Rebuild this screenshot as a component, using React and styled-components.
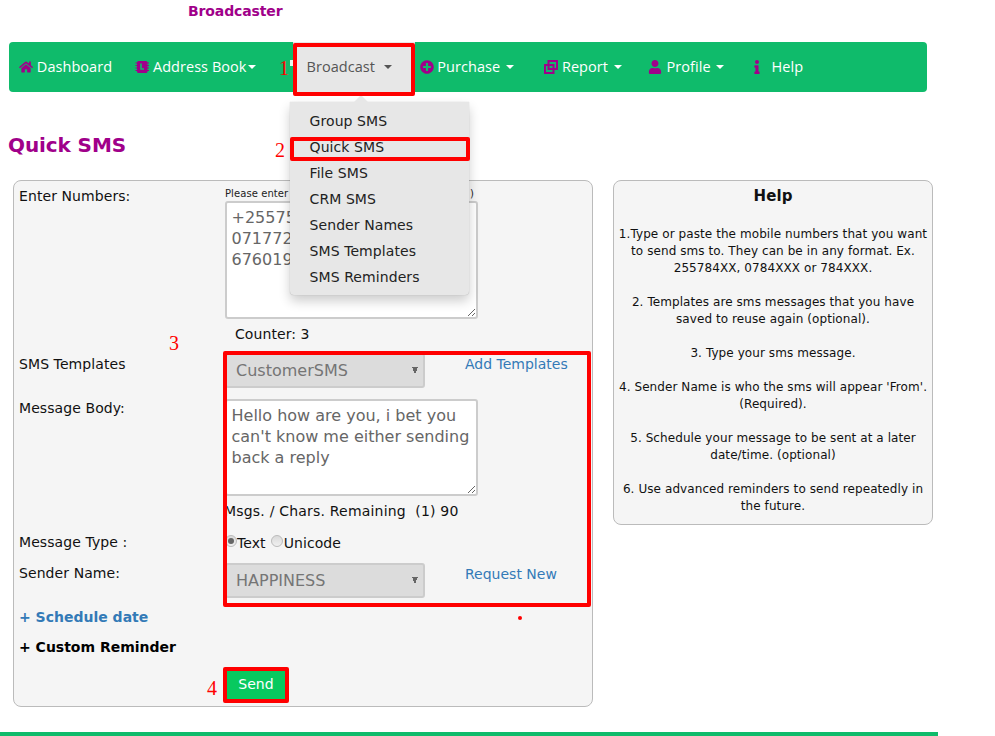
import React from 'react'
import styled, { createGlobalStyle } from 'styled-components'
import { FaHome, FaPlusCircle, FaUser, FaInfo } from 'react-icons/fa'

const purple = '#a0008a'

const GlobalStyle = createGlobalStyle`
  html, body { margin: 0; padding: 0; background: #fff; }
  body { font-family: "DejaVu Sans", Verdana, sans-serif; font-size: 14px; letter-spacing: 0.08px; color: #111; }
`

const helpItems = [
  "1.Type or paste the mobile numbers that you want to send sms to. They can be in any format. Ex. 255784XX, 0784XXX or 784XXX.",
  "2. Templates are sms messages that you have saved to reuse again (optional).",
  "3. Type your sms message.",
  "4. Sender Name is who the sms will appear 'From'. (Required).",
  "5. Schedule your message to be sent at a later date/time. (optional)",
  "6. Use advanced reminders to send repeatedly in the future.",
]

const menuItems = ['Group SMS', 'Quick SMS', 'File SMS', 'CRM SMS', 'Sender Names', 'SMS Templates', 'SMS Reminders']

const DuplicateIcon = () => (
  <svg width="14" height="14" viewBox="0 0 14 14" fill="none" stroke={purple} strokeWidth="2">
    <rect x="4.5" y="1" width="8.5" height="8" />
    <rect x="1" y="5" width="8.5" height="8" />
  </svg>
)

const BookIcon = () => (
  <svg width="14" height="14" viewBox="0 0 14 14">
    <rect x="2" y="1" width="10.5" height="12" rx="1.5" fill={purple} />
    <path d="M0.5 3h3M0.5 5.5h3M0.5 8h3M0.5 10.5h3M11 3h3M11 5.5h3M11 8h3M11 10.5h3" stroke={purple} strokeWidth="1.2" />
    <path d="M6 3.5v5.5h3" fill="none" stroke="#0fbb6b" strokeWidth="1.6" />
  </svg>
)

const App = () => {
  return (
    <Page>
      <GlobalStyle />
      <Brand>Broadcaster</Brand>
      <Nav>
        <NavItem $left={10}><FaHome /> Dashboard</NavItem>
        <NavItem $left={23}><BookIcon /> Address Book<Caret $gap={1} /></NavItem>
        <ActiveItem>
          Broadcast <Caret $gap={5} />
          <Dropdown>
            {menuItems.map(item => <MenuItem key={item}>{item}</MenuItem>)}
          </Dropdown>
        </ActiveItem>
        <NavItem $left={5}><FaPlusCircle /> Purchase <Caret /></NavItem>
        <NavItem $left={30}><DuplicateIcon /> Report <Caret /></NavItem>
        <NavItem $left={26}><FaUser /><ProfileLink> Profile </ProfileLink><Caret /></NavItem>
        <NavItem $left={26}><FaInfo /><HelpLink>Help</HelpLink></NavItem>
      </Nav>
      <Title>Quick SMS</Title>
      <Columns>
        <FormCard>
          <Row $top={5}>
            <Label $top={2}>Enter Numbers:</Label>
            <div>
              <Hint><span>Please enter</span><span>)</span></Hint>
              <TextBox $height={118} readOnly defaultValue={"+25575\n071772\n676019"} />
            </div>
          </Row>
          <Row>
            <span />
            <Counter>Counter: 3</Counter>
          </Row>
          <Row $top={4}>
            <Label $top={3}>SMS Templates</Label>
            <FieldWithLink>
              <Picker disabled defaultValue="CustomerSMS"><option>CustomerSMS</option></Picker>
              <SideLink>Add Templates</SideLink>
            </FieldWithLink>
          </Row>
          <Row $top={11}>
            <Label $top={1}>Message Body:</Label>
            <TextBox $height={97} readOnly defaultValue={"Hello how are you, i bet you can't know me either sending back a reply"} />
          </Row>
          <Row>
            <span />
            <Remaining>Msgs. / Chars. Remaining &nbsp;(1) 90</Remaining>
          </Row>
          <Row $top={8}>
            <Label>Message Type :</Label>
            <Radios>
              <Radio type="radio" name="kind" disabled defaultChecked />Text
              <Radio type="radio" name="kind" disabled />Unicode
            </Radios>
          </Row>
          <Row $top={9}>
            <Label $top={2}>Sender Name:</Label>
            <FieldWithLink>
              <Picker disabled defaultValue="HAPPINESS"><option>HAPPINESS</option></Picker>
              <SideLink>Request New</SideLink>
            </FieldWithLink>
          </Row>
          <Toggle $blue>+ Schedule date</Toggle>
          <Toggle>+ Custom Reminder</Toggle>
          <Row $top={11}>
            <span />
            <SendButton>Send</SendButton>
          </Row>
        </FormCard>
        <HelpCard>
          <HelpTitle>Help</HelpTitle>
          {helpItems.map(item => <HelpText key={item}>{item}</HelpText>)}
        </HelpCard>
      </Columns>
      <Footer />

      <Mark $x={293} $y={43} $w={122} $h={53} />
      <Mark $x={290} $y={137} $w={180} $h={24} />
      <Mark $x={223} $y={351} $w={368} $h={256} />
      <Mark $x={223} $y={667} $w={66} $h={36} />
      <Step $x={279} $y={57}>1</Step>
      <Step $x={275} $y={139}>2</Step>
      <Step $x={169} $y={332}>3</Step>
      <Step $x={207} $y={677}>4</Step>
      <Speck />
      <Dot />
    </Page>
  )
}

export default App

const Page = styled.div`
  position: relative;
  width: 995px;
  height: 736px;
  overflow: hidden;
`

const Brand = styled.div`
  height: 42px;
  padding: 3px 0 0 188px;
  box-sizing: border-box;
  line-height: 17px;
  font-weight: bold;
  letter-spacing: -0.12px;
  color: ${purple};
`

const Nav = styled.nav`
  display: flex;
  align-items: stretch;
  width: 918px;
  height: 50px;
  margin-left: 9px;
  background: #0fbb6b;
  border-radius: 4px;
  font-family: "Open Sans", sans-serif;
  font-size: 14.5px;
  letter-spacing: 0.05px;
  color: #fff;
`

const NavItem = styled.div`
  display: flex;
  align-items: center;
  margin-left: ${p => p.$left}px;
  padding-bottom: 1px;
  white-space: pre;
  svg { color: ${purple}; font-size: 14px; flex: none; }
`

const ProfileLink = styled.span`
  margin-left: 1px;
`

const HelpLink = styled.span`
  margin-left: 7px;
`

const ActiveItem = styled.div`
  position: relative;
  display: flex;
  align-items: center;
  width: 122px;
  height: 50px;
  box-sizing: border-box;
  margin-left: 37px;
  padding: 0 0 1px 14px;
  white-space: pre;
  background: #e7e7e7;
  color: #555;
`

const Caret = styled.span`
  display: inline-block;
  width: 0;
  height: 0;
  margin-left: ${p => p.$gap ?? 2}px;
  border-top: 4px solid currentColor;
  border-left: 4px solid transparent;
  border-right: 4px solid transparent;
`

const Dropdown = styled.div`
  position: absolute;
  top: 60px;
  left: -3px;
  width: 179px;
  height: 193px;
  box-sizing: border-box;
  padding: 6px 0;
  background: #e7e7e7;
  border-radius: 0 0 4px 4px;
  box-shadow: 0 6px 12px rgba(0, 0, 0, 0.2), 0 0 1px rgba(0, 0, 0, 0.3);
  font-family: "DejaVu Sans", sans-serif;
  font-size: 14px;
  letter-spacing: 0.08px;
  color: #222;
  z-index: 2;

  &::before {
    content: '';
    position: absolute;
    top: -7px;
    left: 64px;
    border-left: 7px solid transparent;
    border-right: 7px solid transparent;
    border-bottom: 7px solid #e7e7e7;
  }
`

const MenuItem = styled.div`
  height: 26px;
  line-height: 26px;
  padding-left: 20px;
`

const Title = styled.h2`
  margin: 30px 0 0 8px;
  height: 58px;
  line-height: 46px;
  font-size: 20px;
  font-weight: bold;
  letter-spacing: -0.1px;
  color: ${purple};
`

const Columns = styled.div`
  display: flex;
  align-items: flex-start;
  gap: 20px;
  margin-left: 13px;
`

const FormCard = styled.div`
  width: 580px;
  height: 527px;
  box-sizing: border-box;
  padding: 0 5px;
  background: #f5f5f5;
  border: 1px solid #bbb;
  border-radius: 8px;
`

const Row = styled.div`
  display: grid;
  grid-template-columns: 206px 1fr;
  margin-top: ${p => p.$top || 0}px;
`

const Label = styled.div`
  padding-top: ${p => p.$top || 0}px;
  line-height: 17px;
`

const Hint = styled.div`
  display: flex;
  justify-content: space-between;
  width: 249px;
  height: 15px;
  font-size: 10px;
  line-height: 15px;
  color: #222;
`

const TextBox = styled.textarea`
  display: block;
  width: 253px;
  height: ${p => p.$height}px;
  box-sizing: border-box;
  margin: 0;
  padding: 4px 4.5px;
  border: 2px solid #ccc;
  border-radius: 3px;
  background: #fff;
  font-family: "DejaVu Sans", sans-serif;
  font-size: 16px;
  line-height: 21px;
  color: #666;
  outline: none;
`

const Counter = styled.div`
  padding-left: 10px;
  line-height: 30px;
`

const FieldWithLink = styled.div`
  display: flex;
  align-items: flex-start;
`

const Picker = styled.select`
  appearance: none;
  width: 200px;
  height: 35px;
  box-sizing: border-box;
  margin: 0;
  padding: 0 9px;
  border: 2px solid #ccc;
  border-radius: 3px;
  background-color: #dcdcdc;
  background-image: linear-gradient(to top right, transparent 50%, #666 50%), linear-gradient(to top left, transparent 50%, #666 50%);
  background-size: 3px 7px;
  background-repeat: no-repeat;
  background-position: right 8px center, right 5px center;
  opacity: 1;
  font-family: "DejaVu Sans", sans-serif;
  font-size: 16px;
  color: #757575;
`

const SideLink = styled.a`
  margin: 3px 0 0 40px;
  line-height: 17px;
  letter-spacing: 0;
  color: #337ab7;
`

const Remaining = styled.div`
  margin-left: -1px;
  line-height: 30px;
  letter-spacing: 0.2px;
`

const Radios = styled.div`
  display: flex;
  align-items: center;
  height: 20px;
  box-sizing: border-box;
  padding-bottom: 3px;
`

const Radio = styled.input`
  appearance: none;
  position: relative;
  flex: none;
  width: 12px;
  height: 12px;
  margin: -3px 0 0 0;
  border: 1px solid #bbb;
  border-radius: 50%;
  background: linear-gradient(#dadada, #f0f0f0);

  & ~ & { margin-left: 5px; margin-right: 1px; }

  &:checked::after {
    content: '';
    position: absolute;
    left: 2px;
    top: 2px;
    width: 6px;
    height: 6px;
    border-radius: 50%;
    background: #666;
  }
`

const Toggle = styled.div`
  margin-top: ${p => (p.$blue ? 11 : 13)}px;
  line-height: 17px;
  font-weight: bold;
  letter-spacing: 0;
  color: ${p => (p.$blue ? '#337ab7' : '#000')};
`

const SendButton = styled.button`
  width: 62px;
  height: 34px;
  margin: 0;
  padding: 0;
  border: 0;
  border-radius: 2px;
  background: #08c95f;
  font-family: "DejaVu Sans", sans-serif;
  font-size: 14px;
  color: #fff;
`

const HelpCard = styled.div`
  width: 320px;
  height: 345px;
  box-sizing: border-box;
  padding: 6px 3px 0;
  background: #f5f5f5;
  border: 1px solid #bbb;
  border-radius: 8px;
  text-align: center;
  font-size: 12px;
  letter-spacing: 0.08px;
  line-height: 17px;
`

const HelpTitle = styled.div`
  margin-bottom: 20px;
  font-size: 15px;
  line-height: 19px;
  font-weight: bold;
`

const HelpText = styled.p`
  margin: 0 0 17px;
`

const Footer = styled.div`
  width: 938px;
  height: 4px;
  margin-top: 25px;
  background: #0fbb6b;
`

const Mark = styled.div`
  position: absolute;
  left: ${p => p.$x}px;
  top: ${p => p.$y}px;
  width: ${p => p.$w}px;
  height: ${p => p.$h}px;
  box-sizing: border-box;
  border: 4px solid #f00;
  border-radius: 2px;
  z-index: 3;
`

const Step = styled.div`
  position: absolute;
  left: ${p => p.$x}px;
  top: ${p => p.$y}px;
  font-family: "Liberation Serif", serif;
  font-size: 20px;
  line-height: 23px;
  color: #f00;
`

const Speck = styled.div`
  position: absolute;
  left: 290px;
  top: 60px;
  width: 3px;
  height: 6px;
  background: #e8f8ee;
`

const Dot = styled.div`
  position: absolute;
  left: 518px;
  top: 616px;
  width: 4px;
  height: 4px;
  border-radius: 50%;
  background: #f00;
`
